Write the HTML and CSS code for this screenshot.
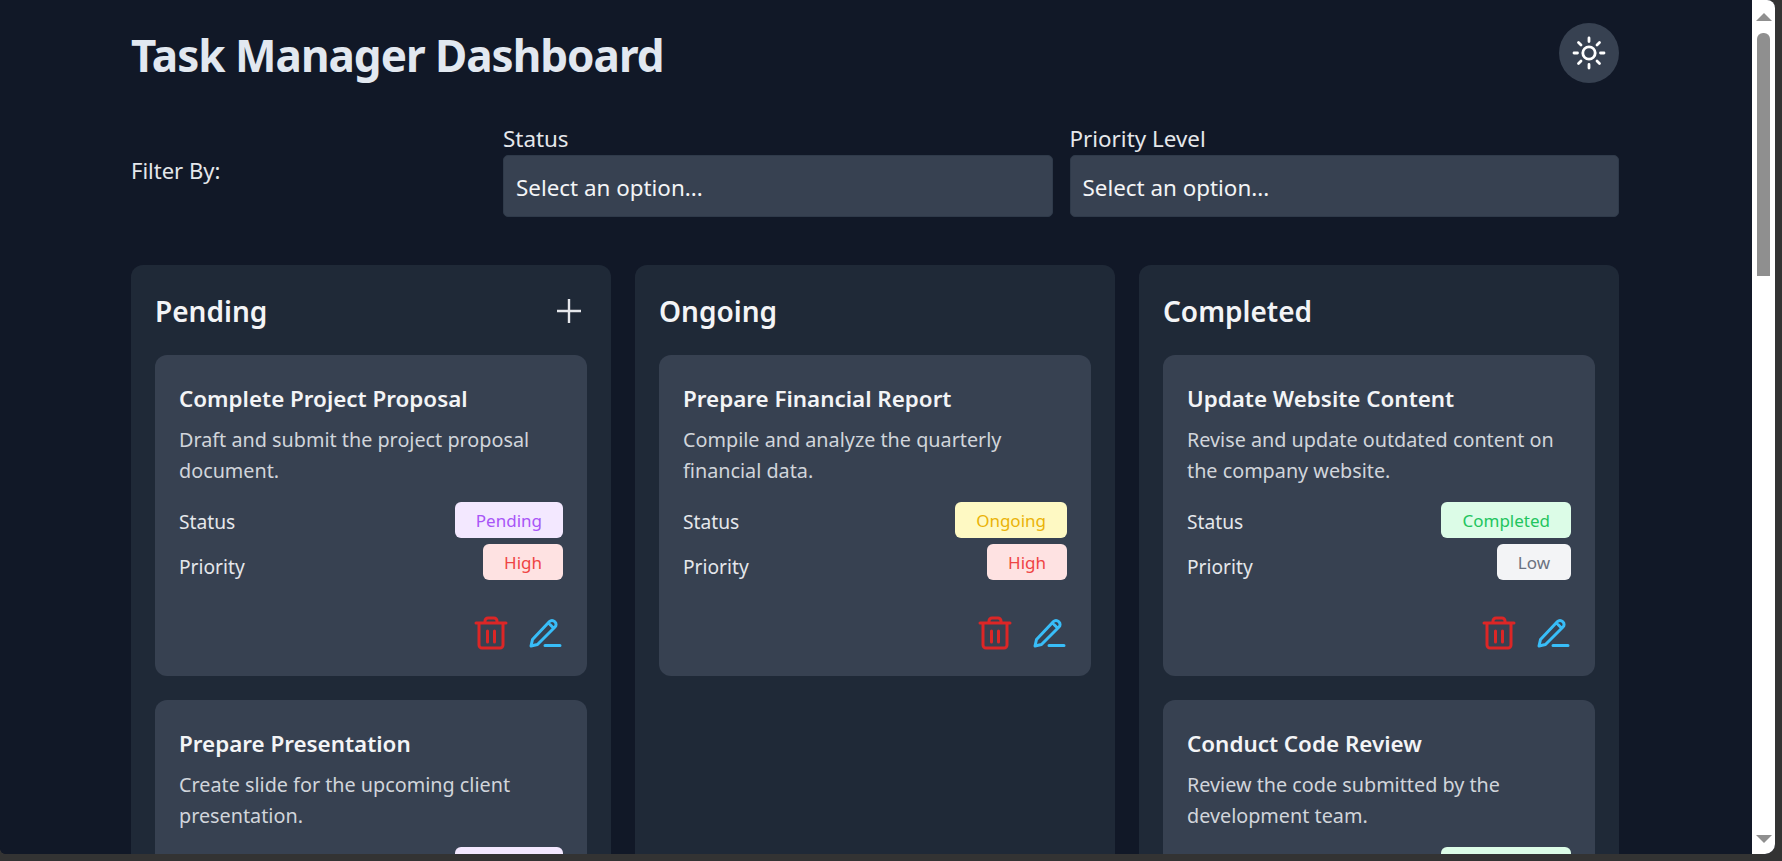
FILE: index.html
```html
<!DOCTYPE html>
<html lang="en">
<head>
  <meta charset="UTF-8">
  <meta name="viewport" content="width=device-width, initial-scale=1.0">
  <title>Task Manager Dashboard</title>
  <link rel="stylesheet" href="styles.css">
</head>
<body>
  <div class="window">
    <div class="viewport">
      <div class="page">
        <header class="header">
          <h1 class="title">Task Manager Dashboard</h1>
          <button class="theme-btn">
            <svg class="sun" viewBox="0 0 36 36" fill="none" stroke="#fff" stroke-width="2.8" stroke-linecap="round">
              <circle cx="18" cy="18" r="6.2"/>
              <path d="M18 3v3.500M18 29.500v3.500M3 18h3.500M29.500 18H33M7.500 7.500l2.500 2.500M26 26l2.500 2.500M7.500 28.500l2.500-2.500M26 10l2.500-2.500"/>
            </svg>
          </button>
        </header>

        <div class="filters">
          <div class="filter-label">Filter By:</div>
          <div class="filter-group">
            <label class="field-label">Status</label>
            <div class="select">Select an option...</div>
          </div>
          <div class="filter-group">
            <label class="field-label">Priority Level</label>
            <div class="select">Select an option...</div>
          </div>
        </div>

        <div class="board">
          <section class="column">
            <div class="column-head">
              <h2>Pending</h2>
              <svg class="plus" viewBox="0 0 26 26" fill="none" stroke="#e5e7eb" stroke-width="2.4">
                <path d="M13 1v24M1 13h24"/>
              </svg>
            </div>

            <article class="card">
              <h3>Complete Project Proposal</h3>
              <p>Draft and submit the project proposal document.</p>
              <div class="meta">
                <div class="meta-labels"><span>Status</span><span>Priority</span></div>
                <div class="meta-badges"><span class="badge purple">Pending</span><span class="badge red">High</span></div>
              </div>
              <div class="actions">
                <svg class="icon trash" viewBox="0 0 36 36"><path d="M3 8h30M12 8V6a3 3 0 0 1 3-3h6a3 3 0 0 1 3 3v2M6 8v22a3 3 0 0 0 3 3h18a3 3 0 0 0 3-3V8M14.500 16v11M21.500 16v11"/></svg>
                <svg class="icon pen" viewBox="0 0 36 36"><path d="M4 31l1.500-6.500L22.500 6.500a3.500 3.500 0 0 1 5 0l.5.5a3.500 3.500 0 0 1 0 5L10.500 29.500zM23 9.500l2.500 2.500M18 30.500h15"/></svg>
              </div>
            </article>

            <article class="card">
              <h3>Prepare Presentation</h3>
              <p>Create slide for the upcoming client presentation.</p>
              <div class="meta">
                <div class="meta-labels"><span>Status</span></div>
                <div class="meta-badges"><span class="badge purple">Pending</span></div>
              </div>
            </article>
          </section>

          <section class="column">
            <div class="column-head">
              <h2>Ongoing</h2>
            </div>

            <article class="card">
              <h3>Prepare Financial Report</h3>
              <p>Compile and analyze the quarterly financial data.</p>
              <div class="meta">
                <div class="meta-labels"><span>Status</span><span>Priority</span></div>
                <div class="meta-badges"><span class="badge yellow">Ongoing</span><span class="badge red">High</span></div>
              </div>
              <div class="actions">
                <svg class="icon trash" viewBox="0 0 36 36"><path d="M3 8h30M12 8V6a3 3 0 0 1 3-3h6a3 3 0 0 1 3 3v2M6 8v22a3 3 0 0 0 3 3h18a3 3 0 0 0 3-3V8M14.500 16v11M21.500 16v11"/></svg>
                <svg class="icon pen" viewBox="0 0 36 36"><path d="M4 31l1.500-6.500L22.500 6.500a3.500 3.500 0 0 1 5 0l.5.5a3.500 3.500 0 0 1 0 5L10.500 29.500zM23 9.500l2.500 2.500M18 30.500h15"/></svg>
              </div>
            </article>
          </section>

          <section class="column">
            <div class="column-head">
              <h2>Completed</h2>
            </div>

            <article class="card">
              <h3>Update Website Content</h3>
              <p>Revise and update outdated content on the company website.</p>
              <div class="meta">
                <div class="meta-labels"><span>Status</span><span>Priority</span></div>
                <div class="meta-badges"><span class="badge green">Completed</span><span class="badge gray">Low</span></div>
              </div>
              <div class="actions">
                <svg class="icon trash" viewBox="0 0 36 36"><path d="M3 8h30M12 8V6a3 3 0 0 1 3-3h6a3 3 0 0 1 3 3v2M6 8v22a3 3 0 0 0 3 3h18a3 3 0 0 0 3-3V8M14.500 16v11M21.500 16v11"/></svg>
                <svg class="icon pen" viewBox="0 0 36 36"><path d="M4 31l1.500-6.500L22.500 6.500a3.500 3.500 0 0 1 5 0l.5.5a3.500 3.500 0 0 1 0 5L10.500 29.500zM23 9.500l2.500 2.500M18 30.500h15"/></svg>
              </div>
            </article>

            <article class="card">
              <h3>Conduct Code Review</h3>
              <p>Review the code submitted by the development team.</p>
              <div class="meta">
                <div class="meta-labels"><span>Status</span></div>
                <div class="meta-badges"><span class="badge green">Completed</span></div>
              </div>
            </article>
          </section>
        </div>
      </div>

      <div class="scrollbar">
        <span class="arrow-up"></span>
        <span class="thumb"></span>
        <span class="arrow-down"></span>
      </div>
    </div>
  </div>
</body>
</html>
```

FILE: styles.css
```css
* {
  margin: 0;
  padding: 0;
  box-sizing: border-box;
}

html, body {
  height: 100%;
  overflow: hidden;
}

body {
  background: #333;
  font-family: "Noto Sans", "Open Sans", sans-serif;
  color: #e5e7eb;
}

.window {
  height: 861px;
  padding: 0 7px 7px 0;
  background: #333;
}

.viewport {
  display: flex;
  height: 100%;
  border-radius: 0 8px 10px 6px;
  overflow: hidden;
  background: #111827;
}

.page {
  flex: 1;
  min-width: 0;
  height: 100%;
  overflow: hidden;
  padding: 23px 133px 0 131px;
  background: #111827;
}

/* header */
.header {
  display: flex;
  align-items: center;
  justify-content: space-between;
  height: 60px;
}

.title {
  padding-top: 4px;
  font-size: 44px;
  font-weight: 700;
  letter-spacing: -1px;
  color: #e2e8f0;
}

.theme-btn {
  display: flex;
  align-items: center;
  justify-content: center;
  width: 60px;
  height: 60px;
  border: 0;
  border-radius: 50%;
  background: #374151;
}

.sun {
  width: 36px;
  height: 36px;
}

/* filters */
.filters {
  display: flex;
  align-items: center;
  gap: 17px;
  margin-top: 44px;
}

.filter-label {
  width: 355px;
  padding-bottom: 4px;
  font-size: 22px;
}

.filter-group {
  flex: 1;
}

.field-label {
  display: block;
  height: 28px;
  font-size: 22.4px;
  line-height: 24px;
}

.select {
  height: 62px;
  padding: 0 12px;
  line-height: 63px;
  font-size: 22.4px;
  color: #f3f4f6;
  background: #374151;
  border: 1px solid #2f3a4a;
  border-radius: 5px;
}

/* board */
.board {
  display: grid;
  grid-template-columns: repeat(3, 1fr);
  gap: 24px;
  margin-top: 48px;
}

.column {
  padding: 24px;
  background: #1f2937;
  border-radius: 12px;
}

.column-head {
  display: flex;
  align-items: center;
  justify-content: space-between;
  height: 42px;
  padding-top: 2px;
  margin-bottom: 24px;
}

.column-head h2 {
  font-size: 28px;
  font-weight: 600;
  color: #f3f4f6;
}

.plus {
  width: 26px;
  height: 26px;
  margin-right: 5px;
}

.card {
  padding: 30px 24px 25px;
  margin-bottom: 24px;
  background: #374151;
  border-radius: 12px;
}

.card h3 {
  font-size: 22.4px;
  font-weight: 600;
  line-height: 28px;
  color: #f3f4f6;
}

.card p {
  margin-top: 11px;
  font-size: 19.8px;
  line-height: 31px;
  color: #d1d5db;
}

.meta {
  display: flex;
  justify-content: space-between;
  margin-top: 16px;
}

.meta-labels {
  display: flex;
  flex-direction: column;
  gap: 15px;
  padding-top: 5px;
  font-size: 19.2px;
  line-height: 30px;
}

.meta-badges {
  display: flex;
  flex-direction: column;
  align-items: flex-end;
  gap: 6px;
}

.badge {
  height: 36px;
  padding: 0 21px;
  font-size: 17px;
  line-height: 37px;
  border-radius: 6px;
}

.purple { background: #f3e8ff; color: #a855f7; }
.red { background: #fee2e2; color: #ef4444; }
.yellow { background: #fef9c3; color: #eab308; }
.green { background: #dcfce7; color: #22c55e; }
.gray { background: #f3f4f6; color: #6b7280; }

.actions {
  display: flex;
  justify-content: flex-end;
  gap: 18px;
  margin-top: 33px;
}

.icon {
  width: 36px;
  height: 36px;
  fill: none;
  stroke-width: 3;
  stroke-linecap: round;
  stroke-linejoin: round;
}

.trash { stroke: #dc2626; }
.pen { stroke: #38bdf8; }

/* browser scrollbar */
.scrollbar {
  display: flex;
  flex-direction: column;
  align-items: center;
  flex: 0 0 23px;
  height: 100%;
  padding: 13px 0 11px;
  background: #fff;
}

.arrow-up, .arrow-down {
  width: 0;
  height: 0;
  border-left: 8px solid transparent;
  border-right: 8px solid transparent;
}

.arrow-up { border-bottom: 8px solid #8f8f8f; }
.arrow-down { border-top: 8px solid #8f8f8f; margin-top: auto; }

.thumb {
  width: 13px;
  height: 243px;
  margin-top: 12px;
  background: #8f8f8f;
  border-radius: 6px 6px 0 0;
}
```
